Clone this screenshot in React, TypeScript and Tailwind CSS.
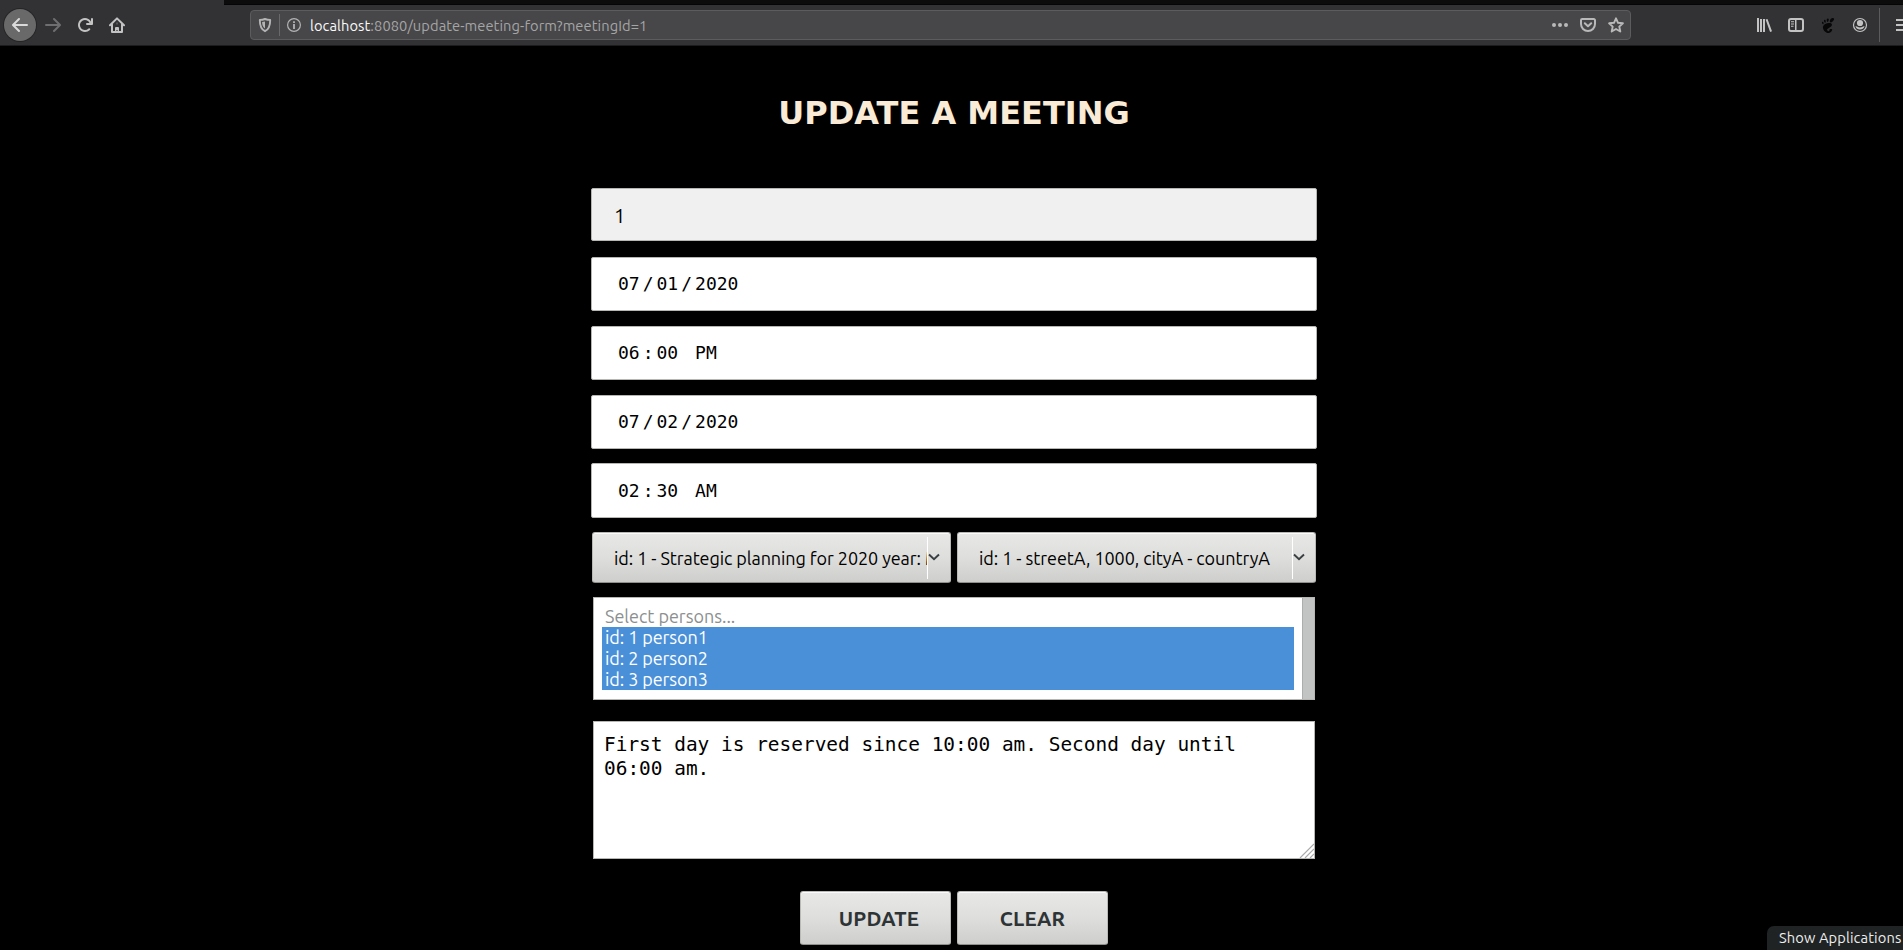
import type { ReactNode } from 'react';
import { SiGnome } from 'react-icons/si';

const UI = "font-['Ubuntu','Noto_Sans',sans-serif]";
const MONO = "font-['DejaVu_Sans_Mono',monospace]";

function Icon({ children, className = '' }: { children: ReactNode; className?: string }) {
  return (
    <svg viewBox="0 0 16 16" className={`h-4 w-4 shrink-0 ${className}`} fill="currentColor">
      {children}
    </svg>
  );
}

const ARROW =
  'M15 7H3.414l4.293-4.293a1 1 0 0 0-1.414-1.414l-6 6a1 1 0 0 0 0 1.414l6 6a1 1 0 0 0 1.414-1.414L3.414 9H15a1 1 0 0 0 0-2z';

function Toolbar() {
  return (
    <header className={`flex h-[46px] w-full flex-col overflow-hidden border-b border-[#1c1c1e] bg-[#323234] ${UI}`}>
      <div className="ml-[224px] h-[5px] shrink-0 border-b border-[#050506] bg-[#0c0c0d]" />
      <div className="flex h-10 shrink-0 items-center text-[#c3c3c4]">
        <div className="ml-1 flex h-8 w-8 shrink-0 items-center justify-center rounded-full bg-[#69696a] ring-1 ring-[#262628]">
          <Icon className="text-[#dadada]">
            <path d={ARROW} />
          </Icon>
        </div>
        <Icon className="ml-[9px] rotate-180 text-[#6e6e70]">
          <path d={ARROW} />
        </Icon>
        <Icon className="ml-4">
          <path d="M15 1a1 1 0 0 0-1 1v2.418A6.995 6.995 0 1 0 8 15a6.954 6.954 0 0 0 4.95-2.05 1 1 0 0 0-1.414-1.414A5.019 5.019 0 1 1 12.549 6H10a1 1 0 0 0 0 2h5a1 1 0 0 0 1-1V2a1 1 0 0 0-1-1z" />
        </Icon>
        <Icon className="ml-4">
          <g fill="none" stroke="currentColor" strokeWidth="2" strokeLinecap="round" strokeLinejoin="round">
            <path d="M1 8.2 8 1.4l7 6.8" />
            <path d="M3 7.5V15h10V7.5" />
          </g>
          <path d="M6 15v-4a1 1 0 0 1 1-1h2a1 1 0 0 1 1 1v4H8.6v-2H7.4v2z" />
          <path d="M7 5.4h2v2H7z" opacity=".25" />
        </Icon>

        <div className="ml-[125px] flex h-[30px] w-[1381px] shrink-0 items-center rounded-[4px] border border-[#5c5c5e] bg-[#474749]">
          <Icon className="ml-[6px] text-[#b4b4b5]">
            <path
              d="M8 2c2 .7 3.600.9 5.200.9 0 5-.6 9-5.200 11.300C3.400 11.900 2.800 7.900 2.800 2.900 4.400 2.900 6 2.700 8 2z"
              fill="none"
              stroke="currentColor"
              strokeWidth="1.900"
              strokeLinejoin="round"
            />
            <path d="M8 4.600v7C5.800 10 5.200 7.800 5.100 5.100 6.200 5.100 7 4.900 8 4.600z" />
          </Icon>
          <div className="ml-[6px] h-[22px] w-px shrink-0 bg-[#69696b]" />
          <Icon className="ml-[6px] text-[#b4b4b5]">
            <circle cx="8" cy="8" r="6.400" fill="none" stroke="currentColor" strokeWidth="1.200" />
            <path d="M7.100 4.200h1.800v1.900H7.100zM7.100 7h1.800v5H7.100z" />
          </Icon>
          <span className="ml-2 whitespace-pre pt-px text-[14.670px] tracking-[0.080px] text-[#a5a5a6]">
            <span className="text-[#f9f9fa]">localhost</span>:8080/update-meeting-form?meetingId=1
          </span>
          <div className="ml-auto mr-[6px] flex items-center gap-3 text-[#b9b9ba]">
            <Icon>
              <circle cx="2" cy="8" r="2" />
              <circle cx="8" cy="8" r="2" />
              <circle cx="14" cy="8" r="2" />
            </Icon>
            <Icon>
              <g fill="none" stroke="currentColor" strokeWidth="2" strokeLinecap="round" strokeLinejoin="round">
                <path d="M2.200 2h11.600a1.200 1.200 0 0 1 1.200 1.200V7A7 7 0 0 1 1 7V3.200A1.200 1.200 0 0 1 2.200 2z" />
                <path d="m4.800 6.300 3.200 3 3.200-3" />
              </g>
            </Icon>
            <Icon>
              <path
                d="m8 1.300 2 4.500 4.900.5-3.600 3.300 1 4.900L8 12l-4.300 2.500 1-4.900L1.100 6.300 6 5.800z"
                fill="none"
                stroke="currentColor"
                strokeWidth="1.900"
                strokeLinejoin="round"
              />
            </Icon>
          </div>
        </div>

        <Icon className="ml-[125px]">
          <path d="M1 1h2v14H1zM4 2h2v13H4zM7 2h2v13H7zM9.600 2.500l1.900-.6L16 14.300l-1.900.7z" />
        </Icon>
        <Icon className="ml-4">
          <rect x="1" y="2" width="14" height="12" rx="2" fill="none" stroke="currentColor" strokeWidth="2" />
          <path d="M7 2h1.500v12H7zM3 4.300h3v1H3zM3 6.500h3v1H3zM3 8.700h2.500v1H3z" />
        </Icon>
        <SiGnome className="ml-4 h-[15px] w-4 shrink-0 text-[#070707]" />
        <Icon className="ml-4">
          <circle cx="8" cy="8" r="6.500" fill="none" stroke="currentColor" strokeWidth="1.200" />
          <circle cx="8" cy="6" r="3.100" />
          <path d="M3.400 9.500c.9-.5 1.600 0 2 .2 1.500 1 3.700 1 5.200 0 .4-.2 1.100-.7 2-.2a5 5 0 0 1-9.200 0z" />
        </Icon>
        <div className="ml-[11px] h-[34px] w-px shrink-0 bg-[#5b5b5d]" />
        <Icon className="ml-[15px]">
          <path d="M1 2h14v2H1zM1 7h14v2H1zM1 12h14v2H1z" />
        </Icon>
      </div>
    </header>
  );
}

const BOX = 'border border-[#b6b6b3] bg-white text-black';
const BEVEL =
  'rounded-[3px] border border-[#b9b9b6] border-b-[#8f8f8c] bg-linear-to-b from-[#e8e8e7] via-[#dededc] to-[#cececc] shadow-[inset_0_1px_0_#fbfbfb]';

/* Segments of a date or time value, joined by padded separators. */
function Field({ parts, separators, className }: { parts: string[]; separators: string[]; className: string }) {
  return (
    <div className={`flex w-[726px] items-center rounded-[2px] pl-[26px] text-[18px] leading-none ${BOX} ${MONO} ${className}`}>
      {parts.map((part, i) => (
        <span key={i} className="whitespace-pre">
          {i > 0 && <span className="px-[3px]">{separators[i - 1]}</span>}
          {part}
        </span>
      ))}
    </div>
  );
}

function Dropdown({ label, className }: { label: string; className: string }) {
  return (
    <div className={`flex h-[51px] w-[359px] items-center ${BEVEL}`}>
      <div className={`ml-5 w-[314px] shrink-0 overflow-hidden whitespace-pre pl-px text-[18px] leading-[28px] text-black ${UI} ${className}`}>
        {label}
      </div>
      <div className="h-[42px] w-px shrink-0 bg-white" />
      <svg viewBox="0 0 12 8" className="mb-[2px] h-2 w-3 shrink-0" fill="none" stroke="#3a3f41" strokeWidth="1.900">
        <path d="m1 1.500 5 4.800 5-4.800" />
      </svg>
    </div>
  );
}

function ActionButton({ children, className = '' }: { children: ReactNode; className?: string }) {
  return (
    <button
      type="button"
      className={`flex h-[54px] w-[151px] items-center justify-center pt-[2px] text-[20.500px] font-bold leading-none tracking-[0.200px] text-[#2e3436] ${BEVEL} ${UI} ${className}`}
    >
      {children}
    </button>
  );
}

export default function App() {
  return (
    <div className="relative flex h-[950px] w-[1903px] flex-col overflow-hidden bg-black">
      <Toolbar />
      <main className="ml-[5px] flex flex-col items-center">
        <h1 className="mt-12 h-[38px] whitespace-nowrap font-['DejaVu_Sans',sans-serif] text-[32px] font-bold leading-[38px] text-[#faebd7]">
          UPDATE A MEETING
        </h1>

        <form className="mt-14 flex flex-col items-center">
          <div className={`flex h-[53px] w-[726px] items-center rounded-[2px] border border-[#b6b6b3] bg-[#f0f0f0] pl-[22px] pt-[2px] text-[20px] leading-none text-black ${UI}`}>
            1
          </div>
          <Field className="mt-4 h-[54px]" parts={['07', '01', '2020']} separators={['/', '/']} />
          <Field className="mt-[15px] h-[54px]" parts={['06', '00', 'PM']} separators={[':', ' ']} />
          <Field className="mt-[15px] h-[54px]" parts={['07', '02', '2020']} separators={['/', '/']} />
          <Field className="mt-[14px] h-[55px]" parts={['02', '30', 'AM']} separators={[':', ' ']} />

          <div className="mt-[14px] flex gap-[6px]">
            <Dropdown label="id: 1 - Strategic planning for 2020 year: Meeting" className="tracking-[-0.080px]" />
            <Dropdown label="id: 1 - streetA, 1000, cityA - countryA" className="tracking-[-0.060px]" />
          </div>

          <div className={`mt-[14px] flex h-[103px] w-[722px] ${BOX}`}>
            <ul className={`ml-2 mr-2 flex-1 pt-2 text-[18px] leading-[20px] ${UI}`}>
              <li className="h-[21px] pl-[3px] tracking-[-0.020px] text-[#8c8f90]">Select persons...</li>
              {[1, 2, 3].map((n) => (
                <li key={n} className="h-[21px] bg-[#4a90d9] pl-[3px] tracking-[-0.080px] text-white">
                  {`id: ${n} person${n}`}
                </li>
              ))}
            </ul>
            <div className="w-3 border-l border-[#acaeac] bg-[#c2c4c3]" />
          </div>

          <div className={`relative mt-[21px] h-[138px] w-[722px] px-[10px] pt-[11px] text-[19.440px] leading-6 ${BOX} ${MONO}`}>
            First day is reserved since 10:00 am. Second day until
            <br />
            06:00 am.
            <svg viewBox="0 0 15 15" className="absolute bottom-0 right-0 h-[15px] w-[15px]" stroke="#a9aaac" strokeWidth="1.200">
              <path d="M1 15 15 1M6 15l9-9M11 15l4-4" />
            </svg>
          </div>

          <div className="mt-8 flex gap-[6px]">
            <ActionButton className="pl-[7px]">UPDATE</ActionButton>
            <ActionButton>CLEAR</ActionButton>
          </div>
        </form>
      </main>

      <div className={`absolute bottom-0 right-0 flex h-6 w-[136px] items-center whitespace-nowrap rounded-tl-[7px] bg-[#1f2324] pl-3 pt-px text-[14.670px] leading-none tracking-[0.120px] text-[#eeeeec] ${UI}`}>
        Show Applications
      </div>
    </div>
  );
}
